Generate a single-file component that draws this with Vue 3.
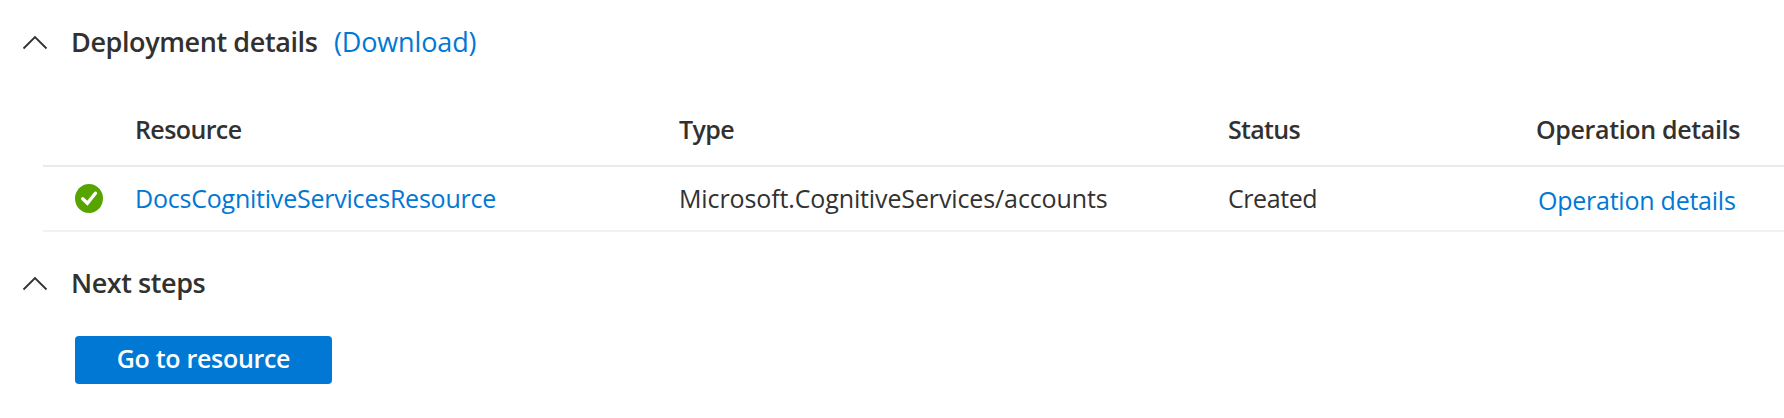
<script setup>
const columns = [
  { label: 'Resource', cls: 'h-resource' },
  { label: 'Type', cls: 'h-type' },
  { label: 'Status', cls: 'h-status' },
  { label: 'Operation details', cls: 'h-operation' },
]
const rows = [
  { resource: 'DocsCognitiveServicesResource', type: 'Microsoft.CognitiveServices/accounts', status: 'Created' },
]
</script>

<template>
  <main class="page">
    <header class="section">
      <svg class="chevron" viewBox="0 0 26 16"><path d="M1.5 13.5 13 2 24.5 13.5" /></svg>
      <h2 class="t-deploy">Deployment details</h2>
      <a class="download">(Download)</a>
    </header>

    <div class="table">
      <div class="row head">
        <span></span>
        <span v-for="c in columns" :key="c.label" :class="c.cls">{{ c.label }}</span>
      </div>
      <div v-for="r in rows" :key="r.resource" class="row body">
        <svg class="ok" viewBox="0 0 28 29">
          <ellipse cx="14" cy="14.5" rx="14" ry="14.5" />
          <path d="M7.7 14.7 12.4 19.2 20.4 9.2" />
        </svg>
        <a class="resource">{{ r.resource }}</a>
        <span class="type">{{ r.type }}</span>
        <span class="status">{{ r.status }}</span>
        <a class="operation">Operation details</a>
      </div>
    </div>

    <header class="section next">
      <svg class="chevron" viewBox="0 0 26 16"><path d="M1.5 13.5 13 2 24.5 13.5" /></svg>
      <h2 class="t-next">Next steps</h2>
    </header>
    <button class="go" type="button">Go to resource</button>
  </main>
</template>

<style>
body { background: #fff; }
</style>

<style scoped>
.page {
  box-sizing: border-box;
  height: 418px;
  padding-top: 19px;
  overflow: hidden;
  background: #fff;
  color: #323130;
  font-family: "Open Sans", "Noto Sans", sans-serif;
  font-size: 25px;
  white-space: nowrap;
}
a { color: #0078d4; }
.section {
  display: flex;
  align-items: center;
  height: 44px;
  padding-left: 22px;
  font-size: 27px;
  line-height: 44px;
}
.chevron { width: 26px; height: 16px; margin-top: 4px; }
.chevron path { fill: none; stroke: #323130; stroke-width: 1.8; }
h2 { margin: 0 0 0 23px; padding-top: 2px; font: inherit; font-weight: 600; width: 263px; }
.t-deploy { letter-spacing: -0.4px; }
.t-next { letter-spacing: -0.43px; }
.download { padding-top: 2px; letter-spacing: -0.15px; }
.table { margin: 29px 0 0 43px; }
.row {
  display: grid;
  grid-template-columns: 92px 544px 549px 308px 1fr;
  align-items: center;
}
.head {
  height: 72px;
  padding-top: 1px;
  border-bottom: 2px solid #eaeaea;
  font-weight: 600;
}
.h-resource, .h-type { letter-spacing: -0.6px; }
.h-status { letter-spacing: -0.7px; }
.h-operation { letter-spacing: -0.35px; }
.body { height: 63px; border-bottom: 2px solid #f1f1f1; }
.ok { width: 28px; height: 29px; margin-left: 32px; }
.ok ellipse { fill: #57a300; }
.ok path { fill: none; stroke: #fff; stroke-width: 3.4; stroke-linecap: round; }
.resource, .type, .status { padding-bottom: 2px; }
.resource { letter-spacing: -0.22px; }
.type { letter-spacing: -0.12px; }
.status { letter-spacing: -0.43px; }
.operation { padding: 3px 0 0 2px; letter-spacing: -0.24px; }
.next { margin-top: 28px; }
.go {
  display: block;
  width: 257px;
  height: 48px;
  margin: 32px 0 0 75px;
  padding: 0 0 4px;
  border: 0;
  border-radius: 4px;
  background: #0078d4;
  color: #fff;
  font: 600 25px/44px "Open Sans", "Noto Sans", sans-serif;
  letter-spacing: -0.3px;
}
</style>
